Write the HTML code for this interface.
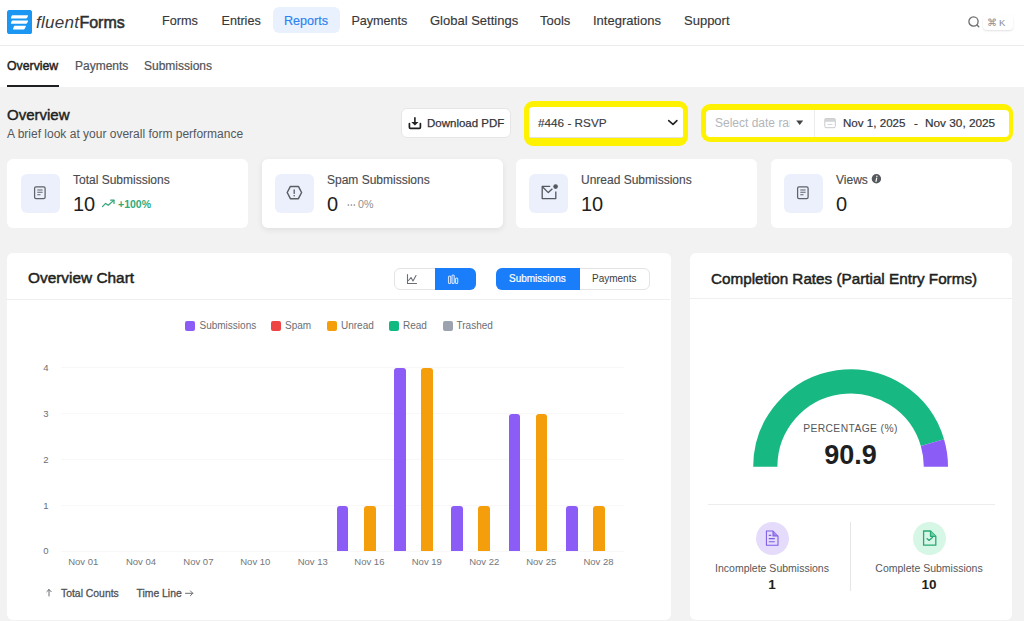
<!DOCTYPE html>
<html><head><meta charset="utf-8">
<style>
*{box-sizing:border-box;margin:0;padding:0}
html,body{width:1024px;height:621px;overflow:hidden;background:#f2f2f2;font-family:"Liberation Sans",sans-serif;color:#1e1f21}
.a{position:absolute;white-space:nowrap}
#hdr{position:absolute;left:0;top:0;width:1024px;height:46px;background:#fff;border-bottom:1px solid #ececec}
#sub{position:absolute;left:0;top:46px;width:1024px;height:41px;background:#fff}
.nav{font-size:13px;line-height:20px;color:#37383a;-webkit-text-stroke:0.15px #37383a;top:11px!important}
.card{position:absolute;background:#fff;border-radius:6px}
.ibox{position:absolute;width:39px;height:39px;border-radius:6px;background:#ebf0fc}
.st{font-size:12px;line-height:16px;color:#4a4c50;-webkit-text-stroke:0.15px #4a4c50;margin-top:1px}
.sv{font-size:20px;line-height:22px;color:#1e1f21}

.bar{position:absolute;width:11.7px;border-radius:3px 3px 0 0}
.xl{position:absolute;width:50px;text-align:center;top:555px;font-size:9.5px;line-height:14px;color:#74777b}
.yl{position:absolute;left:40px;width:12px;text-align:center;font-size:9.5px;line-height:14px;color:#6b6e73}
.gl{position:absolute;left:61px;width:563px;height:1px;background:#f8f8f9}
.lg{position:absolute;top:320.5px;width:10px;height:10px;border-radius:2px}
.lt{position:absolute;top:319px;font-size:10px;line-height:14px;color:#6b6e73;white-space:nowrap}
</style></head><body>

<!-- header -->
<div id="hdr">
  <div class="a" style="left:7px;top:10px;width:25px;height:24px;border-radius:3px;background:#1f8ffb"></div>
  <div class="a" style="left:36px;top:13px;font-size:16px;line-height:20px;color:#2e2f31"><span style="font-style:italic;font-size:17px;letter-spacing:0.3px;color:#3a3b3d">fluent</span><span style="-webkit-text-stroke:0.55px #2e2f31">Forms</span></div>
  <div class="a" style="left:273px;top:7px;width:67px;height:26px;border-radius:6px;background:#e8f1fd"></div>
  <div class="a nav" style="left:162px;top:10px;font-size:12.7px">Forms</div>
  <div class="a nav" style="left:221.5px;top:10px;font-size:12.6px">Entries</div>
  <div class="a nav" style="left:284px;top:10px;font-size:12.6px;color:#2a83f0;-webkit-text-stroke:0.15px #2a83f0">Reports</div>
  <div class="a nav" style="left:351.4px;top:10px;font-size:12.6px">Payments</div>
  <div class="a nav" style="left:430px;top:10px">Global Settings</div>
  <div class="a nav" style="left:540px;top:10px">Tools</div>
  <div class="a nav" style="left:593px;top:10px">Integrations</div>
  <div class="a nav" style="left:684px;top:10px">Support</div>
</div>

<!-- subnav -->
<div id="sub">
  <div class="a" style="left:7px;top:12px;font-size:12.3px;line-height:16px;color:#1e1f21;-webkit-text-stroke:0.45px #1e1f21">Overview</div>
  <div class="a" style="left:75px;top:12px;font-size:12px;line-height:16px;color:#515357;-webkit-text-stroke:0.2px #515357">Payments</div>
  <div class="a" style="left:144px;top:12px;font-size:12px;line-height:16px;color:#515357;-webkit-text-stroke:0.2px #515357">Submissions</div>
  <div class="a" style="left:7px;top:39px;width:52px;height:2px;background:#1e1f21"></div>
</div>

<!-- overview title -->
<div class="a" style="left:7px;top:105px;font-size:15px;line-height:20px;color:#1e1f21;-webkit-text-stroke:0.45px #1e1f21">Overview</div>
<div class="a" style="left:7px;top:126px;font-size:12px;line-height:16px;color:#55575a">A brief look at your overall form performance</div>

<!-- download -->
<div class="a" style="left:401px;top:108px;width:110px;height:30px;border-radius:6px;background:#fff;border:1px solid #e6e6e8"></div>
<div class="a" style="left:427px;top:115px;font-size:11.5px;line-height:16px;color:#333437;-webkit-text-stroke:0.25px #333437">Download PDF</div>

<!-- select -->
<div class="a" style="left:524px;top:101px;width:164px;height:45px;border-radius:9px;background:#fff200"></div>
<div class="a" style="left:529px;top:107px;width:154px;height:31px;border-radius:4px 4px 2px 2px;background:#fff;border-bottom:1px solid #e2e2e2"></div>
<div class="a" style="left:538px;top:115px;font-size:11.75px;line-height:16px;color:#3b3c3f;-webkit-text-stroke:0.15px #3b3c3f">#446 - RSVP</div>

<!-- date -->
<div class="a" style="left:701px;top:104px;width:312px;height:38px;border-radius:9px;background:#fff200"></div>
<div class="a" style="left:705.5px;top:110px;width:303.5px;height:27px;border-radius:4px;background:#fff"></div>
<div class="a" style="left:715px;top:115px;width:75px;overflow:hidden;font-size:12px;line-height:16px;color:#b3b5b9">Select date range</div>
<div class="a" style="left:843px;top:115px;font-size:11.6px;line-height:16px;color:#333437;-webkit-text-stroke:0.2px #333437">Nov 1, 2025</div>
<div class="a" style="left:914px;top:115px;font-size:11.6px;line-height:16px;color:#333437;-webkit-text-stroke:0.2px #333437">-</div>
<div class="a" style="left:925px;top:115px;font-size:11.8px;line-height:16px;color:#333437;-webkit-text-stroke:0.2px #333437">Nov 30, 2025</div>

<!-- stat cards -->
<div class="card" style="left:7px;top:158.5px;width:241px;height:69px"></div>
<div class="card" style="left:262px;top:158.5px;width:241px;height:69px;box-shadow:0 2px 6px rgba(0,0,0,.08)"></div>
<div class="card" style="left:516px;top:158.5px;width:241px;height:69px"></div>
<div class="card" style="left:771px;top:158.5px;width:241px;height:69px"></div>
<div class="ibox" style="left:21px;top:174px"></div>
<div class="ibox" style="left:275px;top:174px"></div>
<div class="ibox" style="left:529px;top:174px"></div>
<div class="ibox" style="left:784px;top:174px"></div>
<div class="a st" style="left:73px;top:171px">Total Submissions</div>
<div class="a st" style="left:327px;top:171px">Spam Submissions</div>
<div class="a st" style="left:581px;top:171px">Unread Submissions</div>
<div class="a st" style="left:836px;top:171px">Views</div>
<div class="a sv" style="left:73px;top:193px">10</div>
<div class="a sv" style="left:327px;top:193px">0</div>
<div class="a sv" style="left:581px;top:193px">10</div>
<div class="a sv" style="left:836px;top:193px">0</div>

<!-- chart card -->
<div class="card" style="left:7px;top:253px;width:664px;height:366.5px"></div>
<div class="a" style="left:7px;top:299px;width:663px;height:1px;background:#efefef"></div>
<div class="a" style="left:28px;top:268px;font-size:15.4px;line-height:20px;color:#1e1f21;-webkit-text-stroke:0.5px #1e1f21">Overview Chart</div>

<!-- completion card -->
<div class="card" style="left:690px;top:253px;width:322px;height:366.5px"></div>
<div class="a" style="left:690px;top:298px;width:322px;height:1px;background:#efefef"></div>
<div class="a" style="left:711px;top:269px;font-size:15.25px;line-height:20px;color:#1e1f21;-webkit-text-stroke:0.5px #1e1f21">Completion Rates (Partial Entry Forms)</div>


<!-- chart toggles -->
<div class="a" style="left:394px;top:268px;width:82px;height:22px;border-radius:6px;border:1px solid #e3e4e6;background:#fff"></div>
<div class="a" style="left:435px;top:268px;width:41px;height:22px;border-radius:0 6px 6px 0;background:#1a7efb"></div>
<svg class="a" style="left:405px;top:272px" width="14" height="14" viewBox="0 0 14 14" fill="none" stroke="#6b6e73" stroke-width="1.1" stroke-linecap="round" stroke-linejoin="round"><path d="M2.5 2.5V11.5H11.5"/><path d="M3.5 8.5L6 5.5L8 9L11 3.5"/></svg>
<svg class="a" style="left:446px;top:273px" width="14" height="12" viewBox="0 0 14 12" fill="none" stroke="#cfe3ff" stroke-width="1.1"><rect x="2.5" y="3" width="2.2" height="7.5" rx="1"/><rect x="6" y="2" width="2.2" height="8.5" rx="1"/><rect x="9.5" y="5" width="2.2" height="5.5" rx="1"/></svg>
<div class="a" style="left:496px;top:268px;width:154px;height:22px;border-radius:6px;border:1px solid #e3e4e6;background:#fff"></div>
<div class="a" style="left:496px;top:268px;width:84px;height:22px;border-radius:6px 0 0 6px;background:#1a7efb"></div>
<div class="a" style="left:509px;top:272px;font-size:10px;line-height:14px;color:#fff;-webkit-text-stroke:0.2px #fff">Submissions</div>
<div class="a" style="left:592px;top:272px;font-size:10px;line-height:14px;color:#3a3b3d">Payments</div>

<!-- legend -->
<div class="lg" style="left:185px;background:#8b5cf6"></div><div class="lt" style="left:199.5px">Submissions</div>
<div class="lg" style="left:271px;background:#ef4444"></div><div class="lt" style="left:285px">Spam</div>
<div class="lg" style="left:327px;background:#f59e0b"></div><div class="lt" style="left:341px">Unread</div>
<div class="lg" style="left:389px;background:#10b981"></div><div class="lt" style="left:403px">Read</div>
<div class="lg" style="left:443px;background:#9ca3af"></div><div class="lt" style="left:456.5px">Trashed</div>

<!-- grid -->
<div class="gl" style="top:367px"></div>
<div class="gl" style="top:413px"></div>
<div class="gl" style="top:459px"></div>
<div class="gl" style="top:505px"></div>
<div class="gl" style="top:551px"></div>
<div class="yl" style="top:360.6px">4</div>
<div class="yl" style="top:406.7px">3</div>
<div class="yl" style="top:452.7px">2</div>
<div class="yl" style="top:498.8px">1</div>
<div class="yl" style="top:544px">0</div>
<div class="bar" style="left:336.8px;top:505.8px;height:45.2px;background:#8b5cf6"></div>
<div class="bar" style="left:364.0px;top:505.8px;height:45.2px;background:#f59e0b"></div>
<div class="bar" style="left:394.1px;top:368.0px;height:183.0px;background:#8b5cf6"></div>
<div class="bar" style="left:421.4px;top:368.0px;height:183.0px;background:#f59e0b"></div>
<div class="bar" style="left:451.1px;top:505.8px;height:45.2px;background:#8b5cf6"></div>
<div class="bar" style="left:478.3px;top:505.8px;height:45.2px;background:#f59e0b"></div>
<div class="bar" style="left:508.5px;top:413.7px;height:137.3px;background:#8b5cf6"></div>
<div class="bar" style="left:535.7px;top:413.7px;height:137.3px;background:#f59e0b"></div>
<div class="bar" style="left:565.9px;top:505.8px;height:45.2px;background:#8b5cf6"></div>
<div class="bar" style="left:593.1px;top:505.8px;height:45.2px;background:#f59e0b"></div>
<div class="xl" style="left:58.2px">Nov 01</div>
<div class="xl" style="left:116.0px">Nov 04</div>
<div class="xl" style="left:173.4px">Nov 07</div>
<div class="xl" style="left:230.3px">Nov 10</div>
<div class="xl" style="left:287.7px">Nov 13</div>
<div class="xl" style="left:344.4px">Nov 16</div>
<div class="xl" style="left:401.8px">Nov 19</div>
<div class="xl" style="left:459.2px">Nov 22</div>
<div class="xl" style="left:516.2px">Nov 25</div>
<div class="xl" style="left:573.5px">Nov 28</div>
<svg class="a" style="left:45px;top:588px" width="8" height="9" viewBox="0 0 8 9" fill="none" stroke="#6a6d71" stroke-width="1" stroke-linecap="round" stroke-linejoin="round"><path d="M4 1.5V8"/><path d="M1.8 3.7L4 1.5L6.2 3.7"/></svg>
<div class="a" style="left:61px;top:587px;font-size:10.4px;line-height:14px;color:#505256;-webkit-text-stroke:0.3px #505256">Total Counts</div>
<div class="a" style="left:136.5px;top:587px;font-size:10.4px;line-height:14px;color:#505256;-webkit-text-stroke:0.3px #505256">Time Line</div>
<svg class="a" style="left:184px;top:589px" width="10" height="8" viewBox="0 0 10 8" fill="none" stroke="#6a6d71" stroke-width="1" stroke-linecap="round" stroke-linejoin="round"><path d="M1.5 4.3H8.8"/><path d="M6.4 1.9L8.8 4.3L6.4 6.7"/></svg>

<!-- gauge -->
<svg class="a" style="left:690px;top:300px" width="322" height="200" viewBox="690 300 322 200">
<path d="M765.3 466.7A85.3 85.3 0 0 1 932.43 442.62" fill="none" stroke="#18b883" stroke-width="24.2"/>
<path d="M932.43 442.62A85.3 85.3 0 0 1 935.9 466.7" fill="none" stroke="#8b5cf6" stroke-width="24.2"/>
</svg>
<div class="a" style="left:790px;top:422px;width:121px;text-align:center;font-size:10.3px;line-height:14px;letter-spacing:0.4px;color:#55575a">PERCENTAGE (%)</div>
<div class="a" style="left:790px;top:440px;width:121px;text-align:center;font-size:27px;line-height:30px;font-weight:700;color:#1e1f21">90.9</div>
<div class="a" style="left:708px;top:504px;width:287px;height:1px;background:#ececec"></div>
<div class="a" style="left:850px;top:522px;width:1px;height:69px;background:#e6e6e6"></div>
<div class="a" style="left:756px;top:522px;width:33px;height:33px;border-radius:50%;background:#e5dcfc"></div>
<div class="a" style="left:913px;top:522px;width:33px;height:33px;border-radius:50%;background:#d6f6e6"></div>
<div class="a" style="left:700px;top:561px;width:144px;text-align:center;font-size:10.5px;line-height:14px;color:#55575a">Incomplete Submissions</div>
<div class="a" style="left:857px;top:561px;width:144px;text-align:center;font-size:10.5px;line-height:14px;color:#55575a">Complete Submissions</div>
<div class="a" style="left:700px;top:577px;width:144px;text-align:center;font-size:13.5px;line-height:16px;font-weight:700;color:#1e1f21">1</div>
<div class="a" style="left:857px;top:577px;width:144px;text-align:center;font-size:13.5px;line-height:16px;font-weight:700;color:#1e1f21">10</div>


<!-- ICONS -->
<svg class="a" style="left:7px;top:10px" width="25" height="24" viewBox="0 0 25 24">
<rect x="0.3" y="0" width="24.7" height="24.2" rx="2.8" fill="#1b97f3"/>
<path d="M5.6 5.2H20.6Q21.4 5.2 21 6L20.4 7.2Q20 8.6 18.8 8.6H4.4Q3.6 8.6 4 7.8L4.4 6.6Q4.8 5.2 5.6 5.2Z" fill="#fff"/>
<path d="M5.6 10.4H20.6Q21.4 10.4 21 11.2L20.4 12.4Q20 13.8 18.8 13.8H4.4Q3.6 13.8 4 13L4.4 11.8Q4.8 10.4 5.6 10.4Z" fill="#fff"/>
<path d="M7.9 15.8H18.4Q19.2 15.8 18.8 16.6L18.2 17.8Q17.8 19.5 16.6 19.5H6.5Q5.7 19.5 6.1 18.7L6.6 17.2Q7 15.8 7.9 15.8Z" fill="#fff"/>
</svg>
<svg class="a" style="left:966px;top:14px" width="16" height="16" viewBox="0 0 16 16" fill="none" stroke="#6a6c70" stroke-width="1.3" stroke-linecap="round"><circle cx="7.5" cy="7.5" r="4.6"/><path d="M11 11L12.8 12.8"/></svg>
<div class="a" style="left:983px;top:15px;width:30px;height:15px;border-radius:4px;background:#fff;box-shadow:0 1px 2px rgba(0,0,0,.12)"></div>
<div class="a" style="left:987px;top:16px;font-size:10px;line-height:13px;color:#8a8c90">&#8984;</div>
<div class="a" style="left:999px;top:16px;font-size:9.5px;line-height:13px;color:#8a8c90">K</div>

<svg class="a" style="left:406px;top:115px" width="17" height="16" viewBox="0 0 17 16" fill="none"><path d="M3.4 8.6V12.3Q3.4 13.3 4.4 13.3H13.4Q14.4 13.3 14.4 12.3V8.6" stroke="#1f1f21" stroke-width="1.7" stroke-linecap="round"/><path d="M8.9 2.8V8" stroke="#1f1f21" stroke-width="1.6" stroke-linecap="round"/><path d="M5.3 6.9H12.5L8.9 10.4Z" fill="#1f1f21"/></svg>


<svg class="a" style="left:666px;top:118px" width="13" height="9" viewBox="0 0 13 9" fill="none" stroke="#222" stroke-width="1.6" stroke-linecap="round" stroke-linejoin="round"><path d="M2.7 2.6L7 6.4L10.9 2.6"/></svg>

<svg class="a" style="left:795px;top:119px" width="9" height="7" viewBox="0 0 9 7"><path d="M1.2 1.6H8.2L4.7 6Z" fill="#444" /></svg>
<div class="a" style="left:814px;top:110px;width:1px;height:27px;background:#ececec"></div>
<svg class="a" style="left:823px;top:117px" width="14" height="12" viewBox="0 0 14 12" fill="none"><rect x="1.8" y="1.5" width="10.5" height="9.2" rx="1.2" stroke="#c9cacc" stroke-width="1"/><rect x="1.8" y="1.5" width="10.5" height="3.3" fill="#d3d4d6"/><path d="M4.5 7.5H9.5" stroke="#d3d4d6" stroke-width="0.9"/></svg>

<!-- stat icons -->
<svg class="a" style="left:32px;top:185px" width="16" height="16" viewBox="0 0 16 16" fill="none" stroke="#5f6266" stroke-width="1.25"><rect x="2.6" y="1.9" width="10.5" height="11.8" rx="1.4"/><path d="M5.3 5H10.6M5.3 7.3H10.6M5.3 9.8H8.5" stroke-width="1.1"/></svg>
<svg class="a" style="left:286px;top:185px" width="17" height="16" viewBox="0 0 17 16" fill="none" stroke="#5a5d61" stroke-width="1.45" stroke-linejoin="round"><path d="M4.4 1.4H12.4L15.6 7.5L12.4 13.7H4.4L1.2 7.5Z"/><path d="M8.2 5V8.4" stroke-linecap="round" stroke-width="1.3"/><circle cx="8.2" cy="10.7" r="0.8" fill="#5a5d61" stroke="none"/></svg>
<svg class="a" style="left:540px;top:183px" width="19" height="17" viewBox="0 0 19 17" fill="none" stroke="#55585c" stroke-width="1.3" stroke-linejoin="round"><path d="M10.2 3.4H2.2V15.6H15.8V8.4"/><path d="M2.4 3.8L8.3 9.6L12.4 5.8"/><circle cx="15.6" cy="3.6" r="2.3" fill="#55585c" stroke="none"/></svg>
<svg class="a" style="left:795px;top:185px" width="16" height="16" viewBox="0 0 16 16" fill="none" stroke="#5f6266" stroke-width="1.25"><rect x="2.6" y="1.9" width="10.5" height="11.8" rx="1.4"/><path d="M5.3 5H10.6M5.3 7.3H10.6M5.3 9.8H8.5" stroke-width="1.1"/></svg>

<svg class="a" style="left:101px;top:198px" width="15" height="11" viewBox="0 0 15 11" fill="none" stroke="#34a578" stroke-width="1.25" stroke-linecap="round" stroke-linejoin="round"><path d="M1.5 8.6L4.6 5.4L7.2 7.2L12.8 2.4"/><path d="M9.6 2.2H13V5.4"/></svg>
<div class="a" style="left:118px;top:197px;font-size:10.5px;line-height:14px;font-weight:700;color:#30aa78">+100%</div>
<svg class="a" style="left:347px;top:203px" width="9" height="4" viewBox="0 0 9 4" fill="#8d9094"><rect x="0.6" y="1.2" width="1.6" height="1.6" rx=".5"/><rect x="3.6" y="1.2" width="1.6" height="1.6" rx=".5"/><rect x="6.6" y="1.2" width="1.6" height="1.6" rx=".5"/></svg>
<div class="a" style="left:358px;top:197px;font-size:10.7px;line-height:14px;color:#8d9094">0%</div>
<svg class="a" style="left:871px;top:173px" width="11" height="11" viewBox="0 0 11 11"><circle cx="5.4" cy="5.7" r="4.7" fill="#55585c"/><path d="M5.9 3.2V3.4M5.7 5L5 8.4" stroke="#fff" stroke-width="1.2" stroke-linecap="round"/></svg>

<!-- completion icons -->
<svg class="a" style="left:764px;top:529px" width="16" height="18" viewBox="0 0 16 18" fill="none" stroke="#7d5ae6" stroke-width="1.05" stroke-linejoin="round"><path d="M2.4 2H9L14 7V16.2H2.4Z"/><path d="M9 2V7H14" fill="#a48af0"/><path d="M4.8 6.4H7.2M4.8 9.6H10.8M4.8 12.7H10.8" stroke-width="1.1"/></svg>
<svg class="a" style="left:921px;top:529px" width="17" height="18" viewBox="0 0 17 18" fill="none" stroke="#2aa876" stroke-width="1.3" stroke-linejoin="round"><path d="M2.6 2H9.5L14.8 7.3V16.2H2.6Z"/><path d="M9.5 2V7.3H14.8" fill="#6fd2a6"/><path d="M6 9.6L8 11.4L11.4 8.4" stroke-linecap="round"/></svg>

</body></html>
